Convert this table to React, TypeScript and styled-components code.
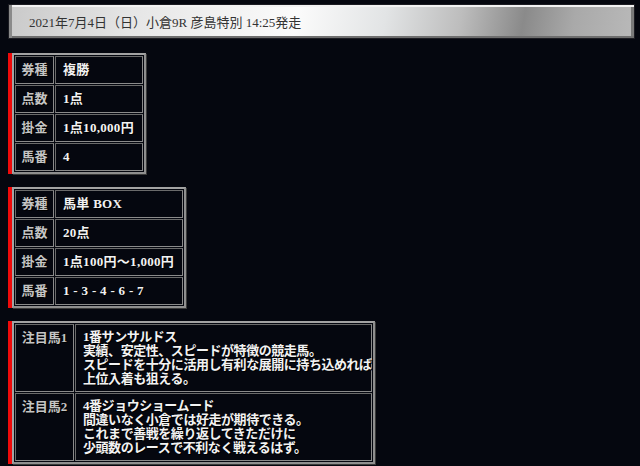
import React from "react";
import styled, { createGlobalStyle } from "styled-components";

const Global = createGlobalStyle`
  html, body { margin: 0; padding: 0; background: #05070f; }
  body { font-family: "Liberation Serif", "Noto Sans CJK JP", serif; }
`;

const Page = styled.div`
  padding: 4px 5px 0 8px;
  display: flex;
  flex-direction: column;
  align-items: flex-start;
  gap: 13px;
  min-height: 462px;
  background: #05070f;
`;

const Header = styled.div`
  box-sizing: border-box;
  width: 627px;
  height: 35px;
  margin-bottom: 1px;
  display: flex;
  align-items: center;
  padding-left: 20px;
  font-size: 13px;
  color: #333;
  border: 1px solid #1c1c22;
  background: linear-gradient(
    100deg,
    #c9c9c9 0%,
    #e6e6e6 20%,
    #fbfbfb 46%,
    #e2e4e5 60%,
    #bdbdbd 72%,
    #8a8a8a 82%,
    #a9a9a9 90%,
    #b9b9b9 100%
  );
  box-shadow: inset 3px 0 0 #8a8a8a, inset 0 2px 0 #f2f2f2,
    inset 0 -2px 0 #6e6e6e, inset -3px 0 0 #7a7a7a;
`;

const Block = styled.div`
  display: flex;
  border-left: 4px solid #f00a0a;
`;

const Table = styled.table<{ $w: number }>`
  width: ${(p) => p.$w}px;
  table-layout: fixed;
  border-collapse: separate;
  border-spacing: 1px;
  border: 2px solid #a3a3a3;
  border-right-color: #8f8f8f;
  border-bottom-color: #8f8f8f;
  box-shadow: 1px 1px 0 #3a3a3a;
`;

const Label = styled.td<{ $w: number; $top?: boolean }>`
  box-sizing: border-box;
  width: ${(p) => p.$w}px;
  border: 1px solid #8a8a8a;
  border-top-color: #6a6a6a;
  border-left-color: #6a6a6a;
  padding: 5px 0;
  text-align: center;
  vertical-align: ${(p) => (p.$top ? "top" : "middle")};
  font-size: 13px;
  line-height: 16px;
  font-weight: bold;
  color: #c4c4c4;
  white-space: nowrap;
  text-shadow: 1px 1px 0 #000;
`;

const Value = styled.td<{ $lh?: number; $tight?: boolean }>`
  border: 1px solid #8a8a8a;
  border-top-color: #6a6a6a;
  border-left-color: #6a6a6a;
  padding: 5px 7px;
  font-size: 13px;
  line-height: ${(p) => p.$lh ?? 16}px;
  letter-spacing: ${(p) => (p.$tight ? "-0.45px" : "0.3px")};
  color: #f2f2f2;
  font-weight: bold;
  white-space: nowrap;
  vertical-align: middle;
  text-shadow: 1px 1px 0 #000;
`;

const Line = styled.div``;

type Row = [string, string];

const t1: Row[] = [
  ["券種", "複勝"],
  ["点数", "1点"],
  ["掛金", "1点10,000円"],
  ["馬番", "4"],
];

const t2: Row[] = [
  ["券種", "馬単 BOX"],
  ["点数", "20点"],
  ["掛金", "1点100円～1,000円"],
  ["馬番", "1 - 3 - 4 - 6 - 7"],
];

const t3: [string, string[]][] = [
  [
    "注目馬1",
    [
      "1番サンサルドス",
      "実績、安定性、スピードが特徴の競走馬。",
      "スピードを十分に活用し有利な展開に持ち込めれば",
      "上位入着も狙える。",
    ],
  ],
  [
    "注目馬2",
    [
      "4番ジョウショームード",
      "間違いなく小倉では好走が期待できる。",
      "これまで善戦を繰り返してきただけに",
      "少頭数のレースで不利なく戦えるはず。",
    ],
  ],
];

function Simple({ rows, w }: { rows: Row[]; w: number }) {
  return (
    <Block>
      <Table $w={w}>
        <tbody>
          {rows.map(([k, v]) => (
            <tr key={k}>
              <Label $w={39}>{k}</Label>
              <Value>{v}</Value>
            </tr>
          ))}
        </tbody>
      </Table>
    </Block>
  );
}

export default function App() {
  return (
    <>
      <Global />
      <Page>
        <Header>2021年7月4日（日）小倉9R 彦島特別 14:25発走</Header>
        <Simple rows={t1} w={134} />
        <Simple rows={t2} w={174} />
        <Block>
          <Table $w={363}>
            <tbody>
              {t3.map(([k, lines]) => (
                <tr key={k}>
                  <Label $w={59} $top>
                    {k}
                  </Label>
                  <Value $lh={14} $tight>
                    {lines.map((l) => (
                      <Line key={l}>{l}</Line>
                    ))}
                  </Value>
                </tr>
              ))}
            </tbody>
          </Table>
        </Block>
      </Page>
    </>
  );
}
